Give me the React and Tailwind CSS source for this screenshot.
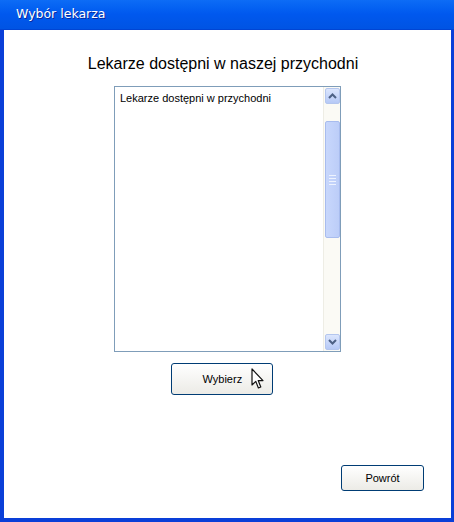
import React from 'react';

function ChevronUp() {
  return (
    <svg width="9" height="6" viewBox="0 0 9 6">
      <path d="M1 5 L4.5 1.5 L8 5" fill="none" stroke="#4d6185" strokeWidth="2" />
    </svg>
  );
}

function ChevronDown() {
  return (
    <svg width="9" height="6" viewBox="0 0 9 6">
      <path d="M1 1 L4.5 4.5 L8 1" fill="none" stroke="#4d6185" strokeWidth="2" />
    </svg>
  );
}

function Cursor() {
  return (
    <svg width="13" height="22" viewBox="0 0 13 22">
      <path
        d="M1 1 L1 17 L4.8 13.4 L7.4 20 L9.8 19 L7.2 12.6 L12 12.6 Z"
        fill="#fff"
        stroke="#111"
        strokeWidth="1.2"
        strokeLinejoin="round"
      />
    </svg>
  );
}

function Scrollbar() {
  return (
    <div className="w-[17px] h-full bg-[#fbfaf5] border-l border-[#eeede5] flex flex-col items-center py-[1px]">
      <div className="w-[15px] h-[16px] rounded-[2px] bg-gradient-to-b from-[#dce6fd] to-[#b6c9f6] border border-[#b4c6ee] flex items-center justify-center">
        <ChevronUp />
      </div>
      <div className="flex-1 w-full flex flex-col items-center pt-[17px]">
        <div className="w-[15px] h-[117px] rounded-[2px] bg-gradient-to-r from-[#c8d7fc] to-[#bccdf8] border border-[#a8bcee] flex flex-col items-center justify-center gap-[2px]">
          <div className="w-[7px] h-[1px] bg-[#eef3fe]" />
          <div className="w-[7px] h-[1px] bg-[#eef3fe]" />
          <div className="w-[7px] h-[1px] bg-[#eef3fe]" />
          <div className="w-[7px] h-[1px] bg-[#eef3fe]" />
        </div>
      </div>
      <div className="w-[15px] h-[16px] rounded-[2px] bg-gradient-to-b from-[#dce6fd] to-[#b6c9f6] border border-[#b4c6ee] flex items-center justify-center">
        <ChevronDown />
      </div>
    </div>
  );
}

export default function App() {
  return (
    <div
      className="w-[454px] h-[522px] flex flex-col bg-[#0a3fd8]"
      style={{ fontFamily: '"Liberation Sans", Arial, sans-serif' }}
    >
      <div className="h-[30px] flex items-center pl-[16px] bg-gradient-to-b from-[#0d6cf6] via-[#0058ee] to-[#0054e3] border-b border-[#0045d4]">
        <span
          className="text-white"
          style={{ fontFamily: '"DejaVu Sans", Verdana, sans-serif', fontSize: '12.5px', textShadow: '1px 1px 0 #0a2a9c' }}
        >
          Wybór lekarza
        </span>
      </div>
      <div className="flex-1 ml-[4px] mr-[3px] mb-[4px] bg-white flex flex-col items-center">
        <h1 className="mt-[24px] text-[16px] leading-[20px] text-black pr-[9px]">
          Lekarze dostępni w naszej przychodni
        </h1>
        <div className="mt-[12px] w-[227px] h-[266px] border border-[#7f9db9] flex">
          <div className="flex-1 pl-[5px] pt-[3px] text-[11px] text-black">Lekarze dostępni w przychodni</div>
          <Scrollbar />
        </div>
        <button className="mt-[11px] mr-[12px] w-[102px] h-[32px] rounded-[3px] border border-[#003c74] bg-gradient-to-b from-white to-[#ecebe6] flex items-center text-[11px] text-black pl-[31px] gap-[9px]">
          <span>Wybierz</span>
          <Cursor />
        </button>
        <div className="flex-1" />
        <div className="w-full flex justify-end pr-[27px] mb-[27px]">
          <button className="w-[83px] h-[26px] rounded-[3px] border border-[#003c74] bg-gradient-to-b from-white to-[#ecebe6] text-[11px] text-black">
            Powrót
          </button>
        </div>
      </div>
    </div>
  );
}
